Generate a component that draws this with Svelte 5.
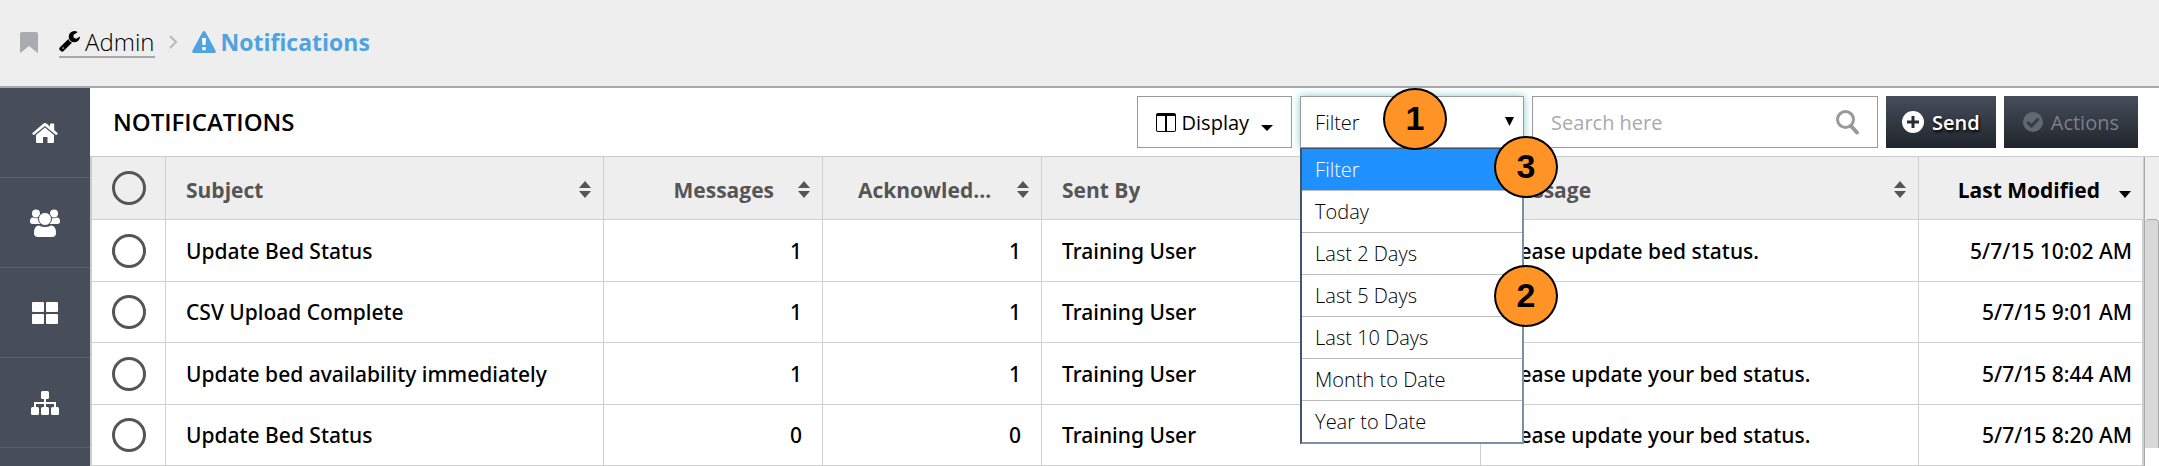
<script>
  let filter = $state('Filter');
  let query = $state('');
  const options = ['Filter', 'Today', 'Last 2 Days', 'Last 5 Days', 'Last 10 Days', 'Month to Date', 'Year to Date'];
  const columns = [
    { title: 'Subject', width: 438 },
    { title: 'Messages', width: 219, right: true },
    { title: 'Acknowledged', width: 219, right: true },
    { title: 'Sent By', width: 439 },
    { title: 'Message', width: 438 },
    { title: 'Last Modified', width: 225, right: true, sorted: true }
  ];
  const rows = [
    ['Update Bed Status', 1, 1, 'Training User', 'Please update bed status.', '5/7/15 10:02 AM'],
    ['CSV Upload Complete', 1, 1, 'Training User', '', '5/7/15 9:01 AM'],
    ['Update bed availability immediately', 1, 1, 'Training User', 'Please update your bed status.', '5/7/15 8:44 AM'],
    ['Update Bed Status', 0, 0, 'Training User', 'Please update your bed status.', '5/7/15 8:20 AM']
  ];
</script>

<div class="page">
  <header class="crumbs">
    <button class="bookmark" aria-label="Bookmark">
      <svg width="18" height="21" viewBox="0 0 18 21"><path d="M2 0h14q2 0 2 2v18q0 1-1 .6L9 14l-8 6.600Q0 21 0 20V2Q0 0 2 0z" fill="#a9abaf" /></svg>
    </button>
    <a class="admin" href="#admin">
      <svg width="21" height="21" viewBox="0 0 1664 1664"><path d="M384 1344q0-26-19-45t-45-19-45 19-19 45 19 45 45 19 45-19 19-45zm644-420l-682 682q-37 37-90 37-52 0-91-37L59 1498q-38-36-38-90 0-53 38-91l681-681q39 98 114.500 173.500T1028 924zm634-435q0 39-23 106-47 134-164.500 217.500T1216 896q-185 0-316.500-131.500T768 448t131.500-316.500T1216 0q58 0 121.500 16.500T1445 63q16 11 16 28t-16 28l-293 169v224l193 107q5-3 79-48.500t135.500-81T1630 454q15 0 23.500 10t8.500 25z" /></svg>
      <span>Admin</span>
    </a>
    <svg class="chev" width="9" height="14" viewBox="0 0 9 14"><path d="M1 1l6 6-6 6" fill="none" stroke="#b9b9b9" stroke-width="2" /></svg>
    <span class="current">
      <svg width="24" height="22" viewBox="0 0 24 22"><path d="M10.500 1Q12-1 13.500 1l10 18.500Q24.500 22 22 22H2Q-.5 22 .5 19.500z" fill="#4fa3e0" /><path d="M10 7h4l-.5 7h-3zM10.300 16h3.400v3.200h-3.400z" fill="#fff" /></svg>
      Notifications
    </span>
  </header>

  <div class="body">
    <nav class="side" aria-label="Main">
      <a href="#home" aria-label="Home">
        <svg width="26" height="20" viewBox="0 0 26 20"><path d="M13 4.500L22 12v7q0 1-1 1h-5.500v-6h-4.500v6H5q-1 0-1-1v-7z" /><path d="M13 0q.8 0 1.500.6L18 3.500V1q0-.6.600-.6h3q.6 0 .6.600v6L25.500 10q.5.500 0 1l-.8.800q-.5.400-1 0L13 3 2.300 11.800q-.5.400-1 0l-.8-.8q-.5-.5 0-1L11.500.6Q12.200 0 13 0z" /></svg>
      </a>
      <a href="#users" aria-label="Users">
        <svg width="30" height="28" viewBox="0 0 30 28"><circle cx="6" cy="4.500" r="4" /><circle cx="24" cy="4.500" r="4" /><path d="M3 8.500q3 1.500 6 .2-.5 4 2 6.300H3q-3 0-3-2.500 0-4 3-4zM27 8.500q-3 1.500-6 .2.500 4-2 6.300h8q3 0 3-2.500 0-4-3-4z" /><circle cx="15" cy="10" r="6.500" stroke="#474e5a" /><path d="M9 16.500q6 3 12 0 5 0 5 7.500 0 4-4 4H8q-4 0-4-4 0-7.500 5-7.500z" /></svg>
      </a>
      <a href="#boards" aria-label="Boards">
        <svg width="26" height="22" viewBox="0 0 26 22"><rect width="12" height="10" rx="1" /><rect x="14" width="12" height="10" rx="1" /><rect y="12" width="12" height="10" rx="1" /><rect x="14" y="12" width="12" height="10" rx="1" /></svg>
      </a>
      <a href="#structure" aria-label="Structure">
        <svg width="28" height="24" viewBox="0 0 28 24"><rect x="10" width="8" height="8" rx="1.500" /><rect y="16" width="8" height="8" rx="1.500" /><rect x="10" y="16" width="8" height="8" rx="1.500" /><rect x="20" y="16" width="8" height="8" rx="1.500" /><path d="M14 7v10M4 17v-5h20v5" fill="none" stroke="#fff" stroke-width="2" /></svg>
      </a>
    </nav>

    <main>
      <div class="toolbar">
        <h1>NOTIFICATIONS</h1>
        <button class="display">
          <svg width="20" height="19" viewBox="0 0 20 19"><path d="M2 0h16q2 0 2 2v15q0 2-2 2H2q-2 0-2-2V2Q0 0 2 0zM1 3v14q0 1 1 1h7V3zM11 3v15h7q1 0 1-1V3z" fill-rule="evenodd" /></svg>
          <span>Display</span>
          <svg class="caret" width="12" height="6" viewBox="0 0 12 6"><path d="M0 0h12L6 6z" /></svg>
        </button>
        <div class="filter">
          <select aria-label="Filter" bind:value={filter}>
            {#each options as o}<option>{o}</option>{/each}
          </select>
          <svg class="arrow" width="9" height="9" viewBox="0 0 9 9"><path d="M0 0h9L4.500 9z" /></svg>
          <ul class="menu">
            {#each options as o}
              <li><button class:on={o === filter} onclick={() => (filter = o)}>{o}</button></li>
            {/each}
          </ul>
          <span class="badge one">1</span>
          <span class="badge two">2</span>
          <span class="badge three">3</span>
        </div>
        <div class="search">
          <input type="text" placeholder="Search here" aria-label="Search" bind:value={query} />
          <svg width="23" height="26" viewBox="0 0 23 26"><circle cx="9.500" cy="10.500" r="8" fill="none" stroke="#999" stroke-width="3" /><path d="M15 17l6 6.500" stroke="#999" stroke-width="4" stroke-linecap="round" /></svg>
        </div>
        <button class="dark">
          <svg width="22" height="22" viewBox="0 0 22 22"><circle cx="11" cy="11" r="11" fill="#fff" /><path d="M11 5v12M5 11h12" stroke="#272c35" stroke-width="3" /></svg>
          <span>Send</span>
        </button>
        <button class="dark off" disabled>
          <svg width="20" height="22" viewBox="0 0 20 22"><circle cx="10" cy="11" r="10" fill="#626871" /><path d="M4.500 11l4 4 7-7.500" fill="none" stroke="#363c46" stroke-width="3" /></svg>
          <span>Actions</span>
        </button>
      </div>

      <div class="grid">
        <table>
          <colgroup>
            <col style="width: 74px" />
            {#each columns as c}<col style="width: {c.width}px" />{/each}
          </colgroup>
          <thead>
            <tr>
              <th class="pick"><input type="checkbox" aria-label="Select all" /></th>
              {#each columns as c}
                <th class:right={c.right} class:sorted={c.sorted}>
                  <div class="head">
                    <span>{c.title}</span>
                    {#if c.sorted}
                      <svg width="12" height="7" viewBox="0 0 12 7"><path d="M0 0h12L6 7z" /></svg>
                    {:else}
                      <svg width="12" height="17" viewBox="0 0 12 17"><path d="M0 7l6-7 6 7zM0 10h12l-6 7z" /></svg>
                    {/if}
                  </div>
                </th>
              {/each}
            </tr>
          </thead>
          <tbody>
            {#each rows as row, r}
              <tr>
                <td class="pick"><input type="checkbox" aria-label="Select row {r + 1}" /></td>
                {#each row as cell, i}
                  <td class:right={columns[i].right} class:last={columns[i].sorted}>{cell}</td>
                {/each}
              </tr>
            {/each}
          </tbody>
        </table>
        <div class="rail"><div class="thumb"></div></div>
      </div>
    </main>
  </div>
</div>

<style>
  :global(body) { margin: 0; background: #fff; }
  .page, button, select, input { font-family: 'Open Sans', 'Noto Sans', sans-serif; }
  .page { color: #000; font-size: 21px; overflow: hidden; }
  .page *, .page { box-sizing: border-box; }
  svg { flex: none; display: block; }
  a { color: inherit; text-decoration: none; }
  button { cursor: pointer; margin: 0; }

  .crumbs { display: flex; align-items: center; height: 88px; padding: 0 20px 2px; background: #eee; border-bottom: 2px solid #a8a8a8; font-size: 24px; }
  .bookmark { border: 0; background: none; padding: 0; margin-right: 21px; }
  .admin { display: flex; align-items: center; gap: 5px; height: 31px; border-bottom: 2px solid #a8a8a8; font-weight: 300; }
  .chev { margin: 0 14px; }
  .current { display: flex; align-items: center; gap: 5px; color: #4fa3e0; font-size: 23px; font-weight: 700; }

  .body { display: flex; }
  .side { width: 90px; flex: none; background: #474e5a; }
  .side a { display: flex; align-items: center; justify-content: center; height: 90px; border-bottom: 1px solid #5c6169; }
  .side svg { fill: #fff; }

  main { flex: 1; min-width: 0; }
  .toolbar { display: flex; align-items: center; gap: 8px; height: 68px; padding: 0 21px 0 23px; }
  h1 { margin: 0 auto 0 0; padding-bottom: 2px; font-size: 24px; font-weight: 600; }
  .display { display: flex; align-items: center; gap: 6px; height: 52px; padding: 0 18px; border: 1px solid #999; background: #fff; font-size: 20px; color: #000; }
  .display .caret { margin: 12px 0 0 6px; }
  .filter { position: relative; width: 224px; height: 52px; }
  select { appearance: none; width: 100%; height: 52px; padding: 0 14px; border: 1px solid #999; border-radius: 0; background: #fff; box-shadow: 0 0 8px #8cc; font-size: 20px; font-weight: 300; color: #000; }
  .arrow { position: absolute; right: 10px; top: 21px; pointer-events: none; }
  .menu { position: absolute; z-index: 2; top: 52px; left: 0; right: 0; margin: 0; padding: 0; list-style: none; border: 2px solid #7b8fa5; border-top: 1px solid #40556c; border-left-color: #40556c; background: #fff; }
  .menu li + li { border-top: 1px solid #bbb; }
  .menu button { display: block; width: 100%; height: 41px; padding: 0 13px; border: 0; background: #fff; text-align: left; font-size: 20px; font-weight: 300; color: #000; }
  .menu .on { background: #1e90ff; color: #fff; }
  .badge { position: absolute; z-index: 3; display: flex; align-items: center; justify-content: center; width: 64px; height: 62px; padding-bottom: 2px; border: 2px solid #000; border-radius: 50%; background: #ff9326; font: 700 34px 'Liberation Sans', Arial, sans-serif; }
  .one { left: 83px; top: -8px; }
  .two { left: 194px; top: 169px; }
  .three { left: 194px; top: 40px; }
  .search { display: flex; align-items: center; width: 346px; height: 52px; padding: 0 18px; border: 1px solid #999; }
  .search input { flex: 1; min-width: 0; border: 0; outline: 0; padding: 0; font-size: 20px; }
  .search input::placeholder { color: #a9a9a9; opacity: 1; }
  .dark { display: flex; align-items: center; gap: 8px; height: 52px; padding: 0 16px; border: 0; background: linear-gradient(#474e5a, #20242c); color: #fff; font-size: 20px; font-weight: 600; text-shadow: 1px 2px 3px #000; }
  .off { padding: 0 19px; color: #7b8089; font-weight: 400; text-shadow: none; }

  .grid { display: flex; border-top: 1px solid #ccc; border-left: 2px solid #ccc; background: linear-gradient(#eee 62px, #fff 62px); }
  table { flex: 1; min-width: 0; width: 100%; table-layout: fixed; border-collapse: separate; border-spacing: 0; }
  th, td { padding: 0 20px; border-right: 1px solid #cfcfcf; border-bottom: 1px solid #cfcfcf; text-align: left; white-space: nowrap; }
  th { height: 63px; padding-right: 12px; background: #eee; color: #555; font-weight: 700; }
  td { height: 61px; background: #fff; font-family: 'Noto Sans', sans-serif; font-weight: 500; }
  tbody tr:nth-child(odd) td { height: 62px; }
  .head { display: flex; align-items: center; justify-content: space-between; gap: 24px; padding-top: 3px; }
  .head span { overflow: hidden; text-overflow: ellipsis; }
  .head svg { fill: #555; }
  .right { text-align: right; }
  th.right { padding-left: 35px; }
  .right .head { justify-content: flex-end; }
  .sorted { color: #000; }
  .sorted .head { gap: 19px; }
  .sorted .head svg { fill: #000; margin-top: 10px; }
  .last { padding-right: 10px; border-right-width: 2px; }
  .pick, th.pick { padding: 0; text-align: center; }
  .pick input { appearance: none; display: block; width: 34px; height: 34px; margin: 0 auto; border: 3px solid #555; border-radius: 50%; background: transparent; }
  .rail { width: 15px; flex: none; padding-top: 62px; border-left: 1px solid #aaa; }
  .thumb { height: 229px; border: 1px solid #aaa; border-bottom: 0; border-left: 0; border-radius: 4px 4px 0 0; background: #d8d8d8; }
</style>
